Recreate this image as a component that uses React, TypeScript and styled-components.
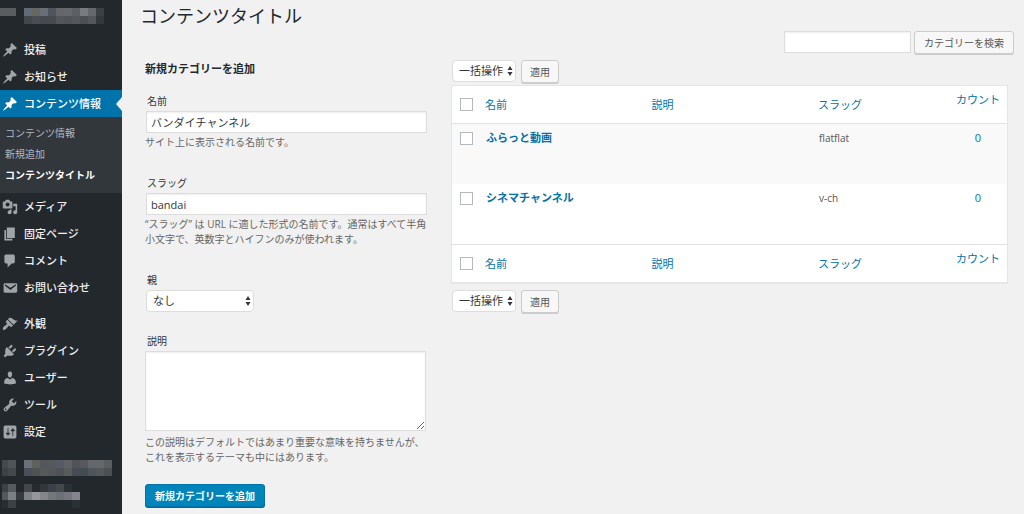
import React from 'react';
import styled, { createGlobalStyle, css } from 'styled-components';

const GlobalStyle = createGlobalStyle`
  *, *::before, *::after { box-sizing: border-box; }
  body {
    margin: 0;
    background: #f1f1f1;
    color: #444;
    font-family: "Open Sans", "Noto Sans CJK JP", sans-serif;
    font-size: 11px;
    line-height: 16px;
  }
  button, input, select, textarea { font-family: inherit; margin: 0; }
`;

const Page = styled.div`
  display: flex;
  min-height: 100vh;
`;

/* ---------- Sidebar ---------- */

const Sidebar = styled.nav`
  flex: 0 0 122px;
  background: #23282d;
`;

const MenuList = styled.ul`
  list-style: none;
  margin: 0;
  padding: 0;
`;

const SiteRow = styled.div`
  display: flex;
  height: 36px;
  padding-top: 8px;
`;

const MenuItem = styled.li<{ $gap?: boolean }>`
  margin-top: ${p => (p.$gap ? 9 : 0)}px;
`;

const MenuLink = styled.a<{ $current?: boolean }>`
  position: relative;
  display: flex;
  align-items: center;
  gap: 6px;
  height: 27px;
  padding-left: 2px;
  color: ${p => (p.$current ? '#fff' : '#eee')};
  background: ${p => (p.$current ? '#0073aa' : 'transparent')};
  font-weight: 500;
  text-decoration: none;
  svg { fill: ${p => (p.$current ? '#fff' : '#a0a5aa')}; }
  ${p => p.$current && css`
    &::after {
      content: '';
      position: absolute;
      right: 0;
      top: 7px;
      border: 7px solid transparent;
      border-left-width: 0;
      border-right: 6px solid #f1f1f1;
    }
  `}
`;

const SubMenu = styled.ul`
  list-style: none;
  margin: 0;
  padding: 6px 0 7px 5px;
  background: #32373c;
`;

const SubLink = styled.a<{ $current?: boolean }>`
  display: block;
  font-size: 10px;
  line-height: 21px;
  color: ${p => (p.$current ? '#fff' : '#b4b9be')};
  font-weight: ${p => (p.$current ? 700 : 400)};
  text-decoration: none;
`;

const MosaicLink = styled.a`
  display: flex;
  min-height: 24px;
  padding-top: 6px;
  align-items: flex-start;
`;

const icons = {
  post: 'M10.44 3.02l1.82-1.82 6.36 6.35-1.83 1.82c-1.05-.68-2.48-.57-3.41.36l-.75.75c-.92.93-1.04 2.35-.35 3.41l-1.83 1.82-2.41-2.41-2.8 2.79c-.42.42-3.38 2.71-3.8 2.29s1.86-3.39 2.28-3.81l2.79-2.79L4.1 9.36l1.83-1.82c1.05.69 2.48.57 3.4-.36l.75-.75c.93-.92 1.05-2.35.36-3.41z',
  media: 'M13 11V4c0-.55-.45-1-1-1h-1.67L9 1H5L3.67 3H2c-.55 0-1 .45-1 1v7c0 .55.45 1 1 1h10c.55 0 1-.45 1-1zM7 4.5c1.38 0 2.5 1.12 2.5 2.5S8.38 9.5 7 9.5 4.5 8.38 4.5 7 5.62 4.5 7 4.5zM14 6h5v10.5c0 1.38-1.12 2.5-2.5 2.5S14 17.88 14 16.5s1.12-2.5 2.5-2.5c.17 0 .34.02.5.05V9h-3V6zm-4 8.05V13h2v3.5c0 1.38-1.12 2.5-2.5 2.5S7 17.88 7 16.5 8.12 14 9.5 14c.17 0 .34.02.5.05z',
  page: 'M6 15V2h10v13H6zm-1 1h8v2H3V5h2v11z',
  comments: 'M5 2h9c1.1 0 2 .9 2 2v7c0 1.1-.9 2-2 2h-2l-5 5v-5H5c-1.1 0-2-.9-2-2V4c0-1.1.9-2 2-2z',
  email: 'M3.87 4h13.25C18.37 4 19 4.59 19 5.79v8.42c0 1.19-.63 1.79-1.88 1.79H3.87c-1.25 0-1.88-.6-1.88-1.79V5.79c0-1.2.63-1.79 1.88-1.79zm6.62 8.6l6.74-5.53c.24-.2.43-.66.13-1.07-.29-.41-.82-.42-1.17-.17l-5.7 3.86L4.8 5.83c-.35-.25-.88-.24-1.17.17-.3.41-.11.87.13 1.07z',
  appearance: 'M14.48 11.06L7.41 3.99l1.5-1.5c.5-.56 2.3-.47 3.51.32 1.21.8 1.43 1.28 2.91 2.1 1.18.64 2.45 1.26 4.45.85zm-.71.71L6.7 4.7 4.93 6.47c-.39.39-.39 1.02 0 1.41l1.06 1.06c.39.39.39 1.03 0 1.42-.6.6-1.43 1.11-2.21 1.69-.35.26-.7.53-1.01.84C1.43 14.23.4 16.08 1.4 17.07c.99 1 2.84-.03 4.18-1.36.31-.31.58-.66.85-1.02.57-.78 1.08-1.61 1.69-2.21.39-.39 1.02-.39 1.41 0l1.06 1.06c.39.39 1.02.39 1.41 0z',
  plugins: 'M13.11 4.36L9.87 7.6 8 5.73l3.24-3.24c.35-.34 1.05-.2 1.56.32.52.51.66 1.21.31 1.55zm-8 1.77l.91-1.12 9.01 9.01-1.19.84c-.71.71-2.63 1.16-3.82 1.16H6.14L4.9 17.26c-.59.59-1.54.59-2.12 0-.59-.58-.59-1.53 0-2.12l1.24-1.24v-3.88c0-1.13.4-3.19 1.09-3.89zm7.26 3.97l3.24-3.24c.34-.35 1.04-.21 1.55.31.52.51.66 1.21.31 1.55l-3.24 3.25z',
  users: 'M10 9.25c-2.27 0-2.73-3.44-2.73-3.44C7 4.02 7.82 2 9.97 2c2.16 0 2.98 2.02 2.71 3.81 0 0-.41 3.44-2.68 3.44zm0 2.57L12.72 10c2.39 0 4.52 2.33 4.52 4.53v2.49s-3.65 1.13-7.24 1.13c-3.65 0-7.24-1.13-7.24-1.13v-2.49c0-2.25 1.94-4.48 4.47-4.48z',
  tools: 'M16.68 9.77c-1.34 1.34-3.3 1.67-4.95.99l-5.41 6.52c-.99.99-2.59.99-3.58 0s-.99-2.59 0-3.57l6.52-5.42c-.68-1.65-.35-3.61.99-4.95 1.28-1.28 3.12-1.62 4.72-1.06l-2.89 2.89 2.82 2.82 2.86-2.87c.53 1.58.18 3.39-1.08 4.65zM3.81 16.21c.4.39 1.04.39 1.43 0 .4-.4.4-1.04 0-1.43-.39-.4-1.03-.4-1.43 0-.39.39-.39 1.03 0 1.43z',
  settings: 'M18 16V4c0-1.1-.9-2-2-2H4c-1.1 0-2 .9-2 2v12c0 1.1.9 2 2 2h12c1.1 0 2-.9 2-2zM8 11h1c.55 0 1 .45 1 1s-.45 1-1 1H8v1.5c0 .28-.22.5-.5.5s-.5-.22-.5-.5V13H6c-.55 0-1-.45-1-1s.45-1 1-1h1V5.5c0-.28.22-.5.5-.5s.5.22.5.5V11zm5-2h-1c-.55 0-1-.45-1-1s.45-1 1-1h1V5.5c0-.28.22-.5.5-.5s.5.22.5.5V7h1c.55 0 1 .45 1 1s-.45 1-1 1h-1v5.5c0 .28-.22.5-.5.5s-.5-.22-.5-.5V9z',
};

type IconName = keyof typeof icons;

const Icon = ({ name }: { name: IconName }) => (
  <svg width="16" height="16" viewBox="0 0 20 20" aria-hidden="true">
    <path d={icons[name]} />
  </svg>
);

/* Pixelated, unreadable labels: each row is a list of 8px cells, "" leaves a cell empty.
   An inset trims the left edge of the first cell. */
const Mosaic = ({ rows, inset = 0 }: { rows: string[][]; inset?: number }) => (
  <svg width="120" height={rows.length * 8} aria-hidden="true">
    {rows.map((row, y) =>
      row.map((fill, x) => {
        const trim = x === 0 ? inset : 0;
        return fill && (
          <rect key={`${x}-${y}`} x={x * 8 + trim} y={y * 8} width={8 - trim} height="8" fill={fill} />
        );
      }),
    )}
  </svg>
);

const siteCells = [
  ['#5a5d60', '#5a5d60', '', '#626a78', '#66675f', '#6a6e76', '#50545c', '#64666a', '#66686b', '#5c5f63', '#7a7b80', '#66696c', '#3c4044'],
  ['', '', '', '#43474b', '#4a4d51', '#46494f', '#474b50', '#53565a', '#505357', '#54575b', '#4c5054', '#54585b', '#33383c'],
];
const pluginCells = [
  ['#44494e', '#4f5458', '', '#6d7078', '#5f605f', '#54585c', '#56585b', '#565b66', '#5f6365', '#525259', '#56585e', '#64686a', '#66696c', '#5a5e61'],
  ['#3c4145', '#43484c', '', '#494e59', '#515254', '#56595a', '#545659', '#505257', '#5a5b5e', '#464c54', '#434b53', '#505559', '#55585b', '#4d5053'],
];
const accountCells = [
  ['#3c4145', '#565b5e', '', '#43474b', '#262b30', '#33373d', '#3c404a', '#43484e', '#2c3136'],
  ['#54595d', '#7c8083', '#363b40', '#808286', '#96979a', '#83868a', '#74787c', '#6c7176', '#74777d', '#84848e'],
  ['#292e33', '#3c4145', '', '', '', '', '', '', '', '#2b2f36'],
];

interface Entry {
  icon: IconName;
  label: string;
  gap?: boolean;
  current?: boolean;
  sub?: string[];
}

const menu: Entry[] = [
  { icon: 'post', label: '投稿' },
  { icon: 'post', label: 'お知らせ' },
  { icon: 'post', label: 'コンテンツ情報', current: true, sub: ['コンテンツ情報', '新規追加', 'コンテンツタイトル'] },
  { icon: 'media', label: 'メディア' },
  { icon: 'page', label: '固定ページ' },
  { icon: 'comments', label: 'コメント' },
  { icon: 'email', label: 'お問い合わせ' },
  { icon: 'appearance', label: '外観', gap: true },
  { icon: 'plugins', label: 'プラグイン' },
  { icon: 'users', label: 'ユーザー' },
  { icon: 'tools', label: 'ツール' },
  { icon: 'settings', label: '設定' },
];

const AdminMenu = () => (
  <Sidebar aria-label="管理メニュー">
    <SiteRow><Mosaic rows={siteCells} /></SiteRow>
    <MenuList>
      {menu.map(item => (
        <MenuItem key={item.label} $gap={item.gap}>
          <MenuLink href="#" $current={item.current}>
            <Icon name={item.icon} />
            {item.label}
          </MenuLink>
          {item.sub && (
            <SubMenu>
              {item.sub.map((label, i) => (
                <li key={label}>
                  <SubLink href="#" $current={i === item.sub!.length - 1}>{label}</SubLink>
                </li>
              ))}
            </SubMenu>
          )}
        </MenuItem>
      ))}
      <MenuItem $gap><MosaicLink href="#"><Mosaic rows={pluginCells} inset={2} /></MosaicLink></MenuItem>
      <MenuItem><MosaicLink href="#"><Mosaic rows={accountCells} inset={2} /></MosaicLink></MenuItem>
    </MenuList>
  </Sidebar>
);

/* ---------- Controls ---------- */

const fieldBox = css`
  border: 1px solid #ddd;
  border-radius: 0;
  background: #fff;
  box-shadow: inset 0 1px 2px rgba(0, 0, 0, 0.07);
  color: #32373c;
  font-size: 11px;
  outline: none;
`;

const TextInput = styled.input`
  ${fieldBox}
  display: block;
  width: 100%;
  height: 22px;
  padding: 0 4px;
`;

const TextArea = styled.textarea`
  ${fieldBox}
  display: block;
  width: 100%;
  height: 80px;
  resize: vertical;
`;

const Button = styled.button<{ $primary?: boolean; $compact?: boolean }>`
  height: 23px;
  padding: 0 ${p => (p.$compact ? 8 : 9)}px;
  border: 1px solid ${p => (p.$primary ? '#0073aa' : '#ccc')};
  border-radius: 3px;
  background: ${p => (p.$primary ? '#0085ba' : '#f7f7f7')};
  box-shadow: 0 1px 0 ${p => (p.$primary ? '#006799' : '#ccc')};
  color: ${p => (p.$primary ? '#fff' : '#555')};
  font-size: 10px;
  font-weight: ${p => (p.$primary ? 700 : 400)};
  line-height: 20px;
  white-space: nowrap;
`;

const SelectWrap = styled.span<{ $width: number }>`
  position: relative;
  display: block;
  width: ${p => p.$width}px;
  svg {
    position: absolute;
    right: 3px;
    top: 6px;
    fill: #32373c;
    pointer-events: none;
  }
`;

const SelectBox = styled.select`
  appearance: none;
  display: block;
  width: 100%;
  height: 22px;
  padding: 0 6px;
  border: 1px solid #ddd;
  border-radius: 4px;
  background: #fff;
  color: #32373c;
  font-size: 11px;
  line-height: 18px;
`;

const Select = ({ width, id, label, option }: { width: number; id?: string; label?: string; option: string }) => (
  <SelectWrap $width={width}>
    <SelectBox id={id} aria-label={label}><option>{option}</option></SelectBox>
    <svg width="6" height="10" viewBox="0 0 6 10" aria-hidden="true">
      <path d="M3 0L5.5 4H.5zM3 10L.5 6h5z" />
    </svg>
  </SelectWrap>
);

const Checkbox = styled.input.attrs({ type: 'checkbox' })`
  appearance: none;
  display: block;
  width: 13px;
  height: 13px;
  border: 1px solid #b4b9be;
  background: #fff;
`;

/* ---------- Main ---------- */

const Main = styled.main`
  flex: 1;
  min-width: 0;
  padding: 4px 10px 6px 18px;
`;

const Title = styled.h1`
  margin: 0 0 3px;
  color: #23282d;
  font-size: 18px;
  font-weight: 400;
  line-height: 24px;
`;

const SearchForm = styled.form`
  display: flex;
  justify-content: flex-end;
  gap: 3px;
  ${TextInput} { width: 127px; }
`;

const Columns = styled.div`
  display: grid;
  grid-template-columns: minmax(0, 291fr) minmax(0, 557fr);
  gap: 15px;
  padding: 6px 6px 0 5px;
`;

const FormTitle = styled.h2`
  margin: 1px 0 17px;
  color: #23282d;
  font-size: 11px;
  font-weight: 700;
  line-height: 16px;
`;

const Field = styled.div<{ $after?: number }>`
  margin-bottom: ${p => p.$after ?? 26}px;
`;

const Label = styled.label`
  display: block;
  margin-bottom: 3px;
  padding-left: 2px;
  font-size: 10px;
  line-height: 14px;
  color: #32373c;
`;

const Control = styled.div`
  margin: 0 9px 0 1px;
`;

const WideControl = styled.div`
  margin: 0 10px 4px 0;
`;

const Help = styled.p`
  margin: 2px 0 0;
  color: #666;
  font-size: 10px;
  line-height: 15px;
`;

const TableNav = styled.div`
  display: flex;
  gap: 5px;
  padding-left: 1px;
`;

const Table = styled.table`
  width: 100%;
  margin: 2px 0 7px;
  table-layout: fixed;
  border: 1px solid #e5e5e5;
  border-collapse: separate;
  border-spacing: 0;
  background: #fff;
  box-shadow: 0 1px 1px rgba(0, 0, 0, 0.04);
`;

const CheckCell = styled.td`
  width: 26px;
  padding: 8px 0 0 8px;
  vertical-align: top;
`;

const HeadRow = styled.tr<{ $foot?: boolean }>`
  height: 38px;
  th {
    padding: 0 0 0 7px;
    font-weight: 400;
    text-align: left;
    vertical-align: middle;
  }
  td {
    padding: 0 0 0 8px;
    vertical-align: middle;
  }
  th, td {
    ${p => (p.$foot ? 'border-top' : 'border-bottom')}: 1px solid #e1e1e1;
  }
  th:nth-child(2), th:nth-child(3) { width: 30%; }
  th:last-child {
    width: 58px;
    padding: 6px 0 0;
    text-align: center;
    vertical-align: top;
  }
`;

const BodyRow = styled.tr<{ $striped?: boolean }>`
  height: 60px;
  background: ${p => (p.$striped ? '#f9f9f9' : '#fff')};
`;

const Cell = styled.td<{ $count?: boolean }>`
  padding: 6px ${p => (p.$count ? 0 : 8)}px 0;
  color: #555;
  font-size: ${p => (p.$count ? 11 : 10)}px;
  text-align: ${p => (p.$count ? 'center' : 'left')};
  vertical-align: top;
`;

const Link = styled.a<{ $strong?: boolean }>`
  color: #0073aa;
  font-size: 11px;
  font-weight: ${p => (p.$strong ? 700 : 400)};
  text-decoration: none;
`;

const terms = [
  { name: 'ふらっと動画', slug: 'flatflat', count: 0 },
  { name: 'シネマチャンネル', slug: 'v-ch', count: 0 },
];

const HeadCells = ({ foot }: { foot?: boolean }) => (
  <HeadRow $foot={foot}>
    <CheckCell><Checkbox aria-label="すべて選択" /></CheckCell>
    {['名前', '説明', 'スラッグ', 'カウント'].map(name => (
      <th key={name} scope="col"><Link href="#">{name}</Link></th>
    ))}
  </HeadRow>
);

const BulkActions = () => (
  <TableNav>
    <Select width={64} label="一括操作を選択" option="一括操作" />
    <Button type="button" $compact>適用</Button>
  </TableNav>
);

export default function App() {
  return (
    <>
      <GlobalStyle />
      <Page>
        <AdminMenu />
        <Main>
          <Title>コンテンツタイトル</Title>
          <SearchForm>
            <TextInput type="search" aria-label="カテゴリーを検索" />
            <Button type="button">カテゴリーを検索</Button>
          </SearchForm>
          <Columns>
            <form>
              <FormTitle>新規カテゴリーを追加</FormTitle>
              <Field>
                <Label htmlFor="name">名前</Label>
                <Control><TextInput id="name" defaultValue="バンダイチャンネル" /></Control>
                <Help>サイト上に表示される名前です。</Help>
              </Field>
              <Field>
                <Label htmlFor="slug">スラッグ</Label>
                <Control><TextInput id="slug" defaultValue="bandai" /></Control>
                <Help>“スラッグ” は URL に適した形式の名前です。通常はすべて半角<br />小文字で、英数字とハイフンのみが使われます。</Help>
              </Field>
              <Field $after={22}>
                <Label htmlFor="parent">親</Label>
                <Control><Select id="parent" width={108} option="なし" /></Control>
              </Field>
              <Field $after={19}>
                <Label htmlFor="description">説明</Label>
                <WideControl><TextArea id="description" /></WideControl>
                <Help>この説明はデフォルトではあまり重要な意味を持ちませんが、<br />これを表示するテーマも中にはあります。</Help>
              </Field>
              <Button type="button" $primary>新規カテゴリーを追加</Button>
            </form>
            <section>
              <BulkActions />
              <Table>
                <thead><HeadCells /></thead>
                <tbody>
                  {terms.map((term, i) => (
                    <BodyRow key={term.slug} $striped={i % 2 === 0}>
                      <CheckCell><Checkbox aria-label={`${term.name}を選択`} /></CheckCell>
                      <Cell><Link href="#" $strong>{term.name}</Link></Cell>
                      <Cell />
                      <Cell>{term.slug}</Cell>
                      <Cell $count><Link href="#">{term.count}</Link></Cell>
                    </BodyRow>
                  ))}
                </tbody>
                <tfoot><HeadCells foot /></tfoot>
              </Table>
              <BulkActions />
            </section>
          </Columns>
        </Main>
      </Page>
    </>
  );
}
